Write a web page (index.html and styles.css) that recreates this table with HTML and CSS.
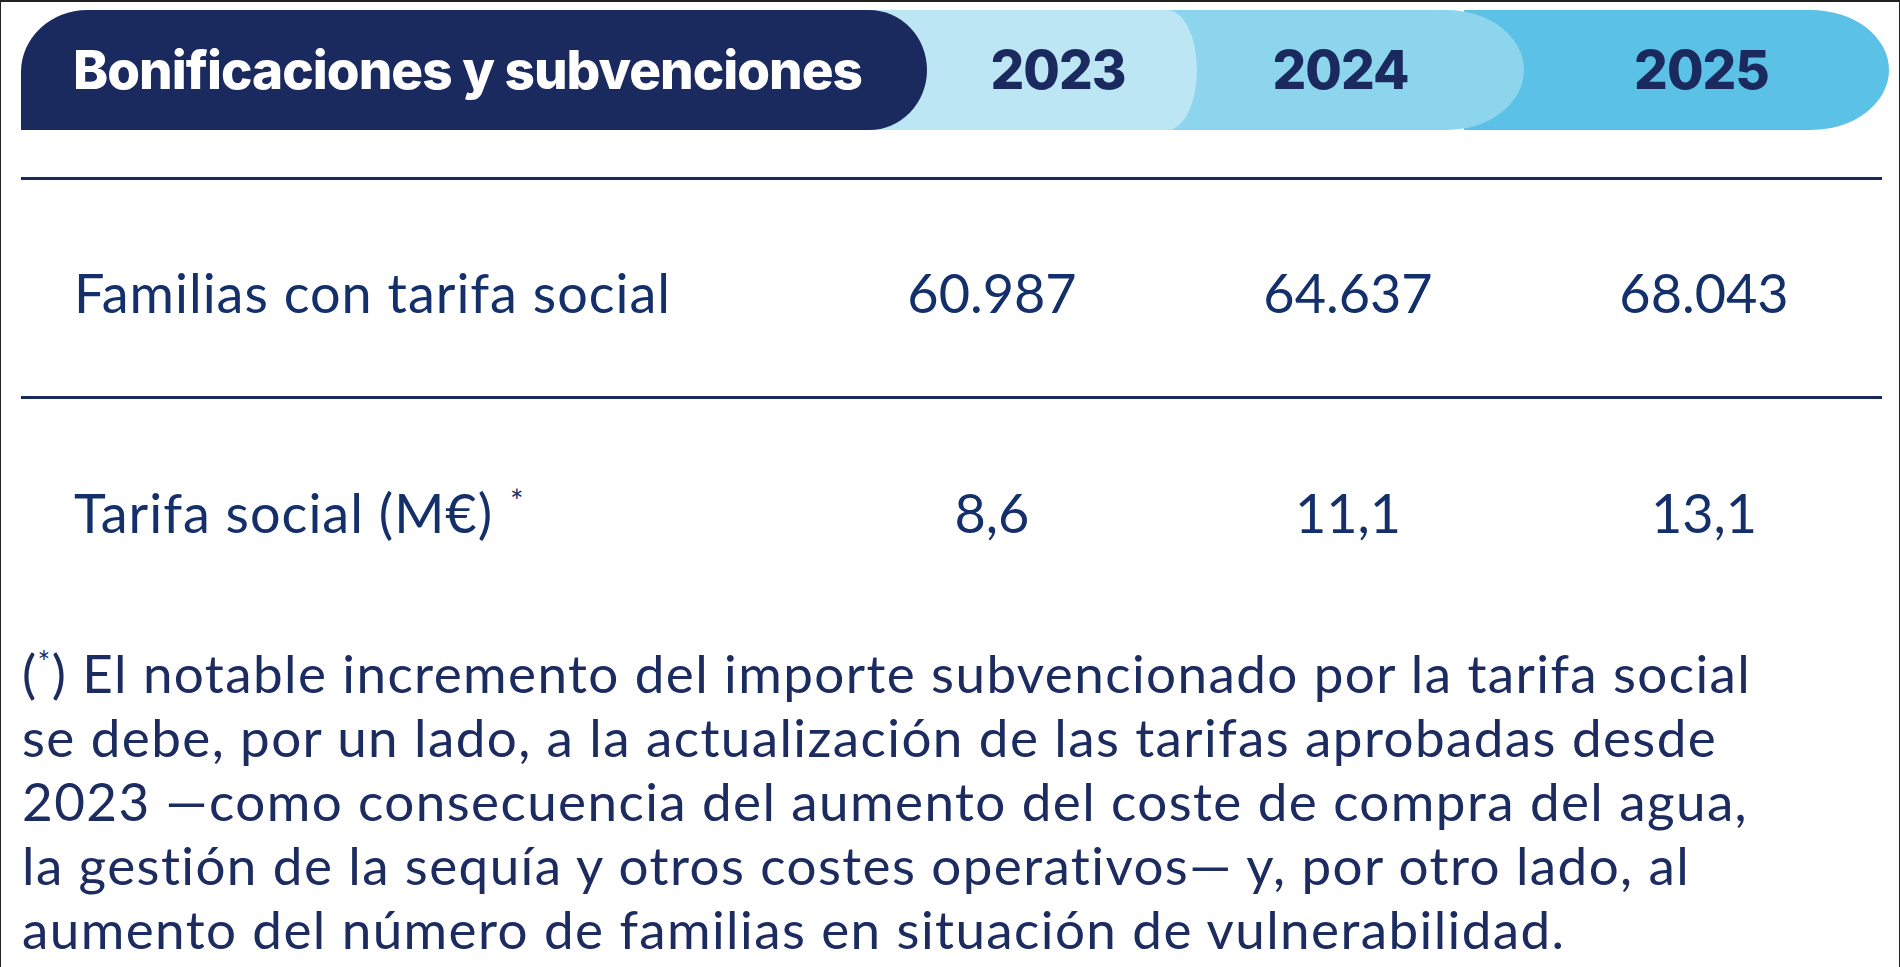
FILE: index.html
```html
<!DOCTYPE html>
<html lang="es">
<head>
<meta charset="utf-8">
<title>Bonificaciones y subvenciones</title>
<link rel="stylesheet" href="styles.css">
</head>
<body>
<div class="frame">
  <div class="table">
    <div class="head">
      <div class="seg seg-title">Bonificaciones y subvenciones</div>
      <div class="seg seg-2023"><span>2023</span></div>
      <div class="seg seg-2024"><span>2024</span></div>
      <div class="seg seg-2025"><span>2025</span></div>
    </div>
    <div class="rule"></div>
    <div class="row row-first">
      <div class="label">Familias con tarifa social</div>
      <div class="val">60.987</div>
      <div class="val">64.637</div>
      <div class="val">68.043</div>
    </div>
    <div class="rule"></div>
    <div class="row row-second">
      <div class="label">Tarifa social (M€) <sup class="ast">*</sup></div>
      <div class="val">8,6</div>
      <div class="val">11,1</div>
      <div class="val">13,1</div>
    </div>
  </div>
  <p class="note">(<sup class="ast-note">*</sup>) El notable incremento del importe subvencionado por la tarifa social<br>se debe, por un lado, a la actualización de las tarifas aprobadas desde<br>2023 —como consecuencia del aumento del coste de compra del agua,<br>la gestión de la sequía y otros costes operativos— y, por otro lado, al<br>aumento del número de familias en situación de vulnerabilidad.</p>
</div>
</body>
</html>
```

FILE: styles.css
```css
html, body {
  margin: 0;
  padding: 0;
  background: #ffffff;
}

.frame {
  box-sizing: border-box;
  width: 1900px;
  height: 967px;
  border-top: 2px solid #222222;
  border-left: 1px solid #222222;
  border-right: 1px solid #222222;
  padding: 0 17px 0 20px;
  font-family: "Lato", "Liberation Sans", sans-serif;
  overflow: hidden;
}

.table {
  width: 1861px;
}

/* header band */
.head {
  display: flex;
  height: 120px;
  margin-top: 8px;
}

.seg {
  position: relative;
  flex: none;
  box-sizing: border-box;
  height: 120px;
  display: flex;
  align-items: center;
  font-family: "Inter", "Lato", sans-serif;
  font-weight: 800;
  font-size: 53px;
  letter-spacing: -1px;
}

.seg-title {
  z-index: 4;
  width: 906px;
  background: #1b2a5e;
  color: #ffffff;
  padding-left: 52px;
  border-radius: 66px 58px 58px 0 / 62px 60px 60px 0;
}

.seg-2023,
.seg-2024,
.seg-2025 {
  color: #1b2a5e;
  justify-content: center;
}

.seg-2023 {
  z-index: 3;
  width: 330px;
  margin-left: -60px;
  padding-left: 60px;
  padding-right: 8px;
  background: #bde6f4;
  border-radius: 0 30px 30px 0 / 0 60px 60px 0;
}

.seg-2024 {
  z-index: 2;
  width: 387px;
  margin-left: -60px;
  padding-left: 60px;
  padding-right: 40px;
  background: #8dd4ed;
  border-radius: 0 77px 77px 0 / 0 60px 60px 0;
}

.seg-2025 {
  z-index: 1;
  width: 425px;
  margin-left: -60px;
  padding-left: 60px;
  padding-right: 10px;
  background: #5bc1e6;
  border-radius: 0 78px 78px 0 / 0 60px 60px 0;
}

/* rules */
.rule {
  height: 3px;
  background: #1b2a5e;
}

.head + .rule {
  margin-top: 47px;
}

/* data rows */
.row {
  display: grid;
  grid-template-columns: 793px 356px 356px 356px;
  box-sizing: border-box;
  color: #14306a;
  font-size: 54px;
  line-height: 65px;
}

.row-first {
  height: 216px;
  padding-top: 80px;
}

.row-second {
  height: 242px;
  padding-top: 81px;
}

.label {
  padding-left: 53px;
  white-space: nowrap;
  letter-spacing: 1px;
}

.val {
  text-align: center;
}

.ast {
  font-size: 32px;
  vertical-align: 20px;
  line-height: 0;
  margin-left: 2px;
}

/* footnote */
.note {
  margin: 0;
  padding-left: 1px;
  color: #1c2c60;
  font-size: 53px;
  line-height: 64px;
  letter-spacing: 1.4px;
  white-space: nowrap;
}

.ast-note {
  font-size: 30px;
  vertical-align: 20px;
  line-height: 0;
}
```
